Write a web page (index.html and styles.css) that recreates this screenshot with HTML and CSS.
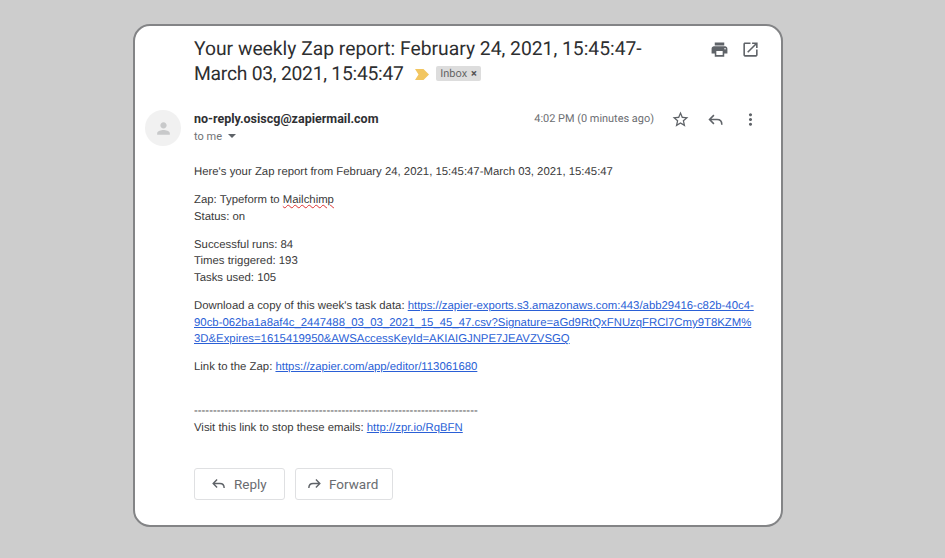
FILE: index.html
```html
<!DOCTYPE html>
<html lang="en">
<head>
<meta charset="utf-8">
<title>Your weekly Zap report</title>
<link rel="stylesheet" href="styles.css">
</head>
<body>
<main class="card">
  <div class="subject-row">
    <h1 class="subject">Your weekly Zap report: February 24, 2021, 15:45:47-<br><span class="subject-tight">March 03, 2021, 15:45:47</span>
      <svg class="marker" viewBox="0 0 14 11" aria-hidden="true"><path d="M0 0h8.500L14 5.500 8.500 11H0l3.500-5.500z"/></svg>
      <span class="label">Inbox <span class="label-x">×</span></span>
    </h1>
    <div class="top-icons">
      <svg class="icon" viewBox="0 0 24 24"><path d="M19 8H5c-1.660 0-3 1.340-3 3v6h4v4h12v-4h4v-6c0-1.660-1.340-3-3-3zm-3 11H8v-5h8v5zm3-7c-.55 0-1-.45-1-1s.45-1 1-1 1 .45 1 1-.45 1-1 1zm-1-9H6v4h12V3z"/></svg>
      <svg class="icon" viewBox="0 0 24 24"><path d="M19 19H5V5h7V3H5c-1.110 0-2 .9-2 2v14c0 1.100.89 2 2 2h14c1.100 0 2-.9 2-2v-7h-2v7zM14 3v2h3.590l-9.830 9.830 1.410 1.410L19 6.410V10h2V3h-7z"/></svg>
    </div>
  </div>
  <div class="message">
    <div class="avatar">
      <svg viewBox="0 0 24 24"><path d="M12 12c2.210 0 4-1.790 4-4s-1.790-4-4-4-4 1.790-4 4 1.790 4 4 4zm0 2c-2.670 0-8 1.340-8 4v2h16v-2c0-2.660-5.330-4-8-4z"/></svg>
    </div>
    <div class="content">
      <header class="meta">
        <div class="sender">
          <div class="from">no-reply.osiscg@zapiermail.com</div>
          <div class="to">to me <span class="caret"></span></div>
        </div>
        <div class="actions">
          <span class="time">4:02 PM (0 minutes ago)</span>
          <svg class="icon" viewBox="0 0 24 24"><path d="M22 9.240l-7.190-.62L12 2 9.190 8.630 2 9.240l5.460 4.730L5.820 21 12 17.270 18.180 21l-1.630-7.030L22 9.240zM12 15.400l-3.760 2.270 1-4.280-3.320-2.880 4.380-.38L12 6.100l1.710 4.040 4.380.38-3.320 2.880 1 4.280L12 15.400z"/></svg>
          <svg class="icon line-icon" viewBox="0 0 24 24"><path d="M10 6.500 4.500 12l5.500 5.500M5 12h9c3.500 0 6 2.500 6 6.500"/></svg>
          <svg class="icon more" viewBox="0 0 24 24"><path d="M12 8c1.100 0 2-.9 2-2s-.9-2-2-2-2 .9-2 2 .9 2 2 2zm0 2c-1.100 0-2 .9-2 2s.9 2 2 2 2-.9 2-2-.9-2-2-2zm0 6c-1.100 0-2 .9-2 2s.9 2 2 2 2-.9 2-2-.9-2-2-2z"/></svg>
        </div>
      </header>
      <div class="body">
        <p>Here's your Zap report from February 24, 2021, 15:45:47-March 03, 2021, 15:45:47</p>
        <p>Zap: Typeform to <span class="spell">Mailchimp</span><br>Status: on</p>
        <p>Successful runs: 84<br>Times triggered: 193<br>Tasks used: 105</p>
        <p>Download a copy of this week's task data: <a href="#">https://zapier-exports.s3.amazonaws.com:443/abb29416-c82b-40c4-<br>90cb-062ba1a8af4c_2447488_03_03_2021_15_45_47.csv?Signature=aGd9RtQxFNUzqFRCl7Cmy9T8KZM%<br>3D&amp;Expires=1615419950&amp;AWSAccessKeyId=AKIAIGJNPE7JEAVZVSGQ</a></p>
        <p>Link to the Zap: <a href="#">https://zapier.com/app/editor/113061680</a></p>
        <p class="signoff">---------------------------------------------------------------------------<br>Visit this link to stop these emails: <a href="#">http://zpr.io/RqBFN</a></p>
      </div>
      <div class="buttons">
        <button class="btn btn-reply" type="button">
          <svg class="line-icon" viewBox="0 0 24 24"><path d="M10 6.500 4.500 12l5.500 5.500M5 12h9c3.500 0 6 2.500 6 6.500"/></svg>
          Reply
        </button>
        <button class="btn btn-forward" type="button">
          <svg class="line-icon" viewBox="0 0 24 24"><path d="M14 6.500 19.500 12 14 17.500M19 12h-9c-3.500 0-6 2.500-6 6.500"/></svg>
          Forward
        </button>
      </div>
    </div>
  </div>
</main>
</body>
</html>
```
FILE: styles.css
```css
* { box-sizing: border-box; }
html, body { margin: 0; height: 100%; }
body {
  background: #cdcdcd;
  font-family: "Liberation Sans", Arial, sans-serif;
  padding: 24px 0 0 133px;
  overflow: hidden;
}
.card {
  width: 650px;
  height: 503px;
  background: #fff;
  border: 2px solid #838486;
  border-radius: 17px;
  padding: 10px 21px 0 10px;
}
.subject-row {
  display: flex;
  justify-content: space-between;
  padding-left: 49px;
}
.subject {
  margin: 0;
  font: 400 19.300px/25px "Roboto", sans-serif;
  color: #2d2e30;
  text-rendering: geometricPrecision;
}
.subject-tight { letter-spacing: -0.25px; }
.marker { width: 14px; height: 11px; fill: #f2c661; margin: 0 3px 0 6px; }
.label {
  display: inline-block;
  background: #dddddd;
  color: #666;
  font: 400 11px/15px "Roboto", sans-serif;
  padding: 0 3px 0 4px;
  border-radius: 2px;
  vertical-align: 3px;
  width: 45px;
  white-space: nowrap;
}
.label-x { font-weight: 700; color: #555; margin-left: 1px; }
.top-icons { display: flex; gap: 12px; padding-top: 4px; }
.icon { width: 19px; height: 19px; fill: #5f6368; display: block; }
.line-icon { fill: none; stroke: #5f6368; stroke-width: 2; }
.message { display: flex; margin-top: 24px; }
.avatar {
  flex: none;
  width: 36px;
  height: 36px;
  border-radius: 50%;
  background: #f1f1f1;
  display: flex;
  align-items: center;
  justify-content: center;
  margin-right: 13px;
}
.avatar svg { width: 19px; height: 19px; fill: #c8c9ca; }
.content { flex: 1; min-width: 0; }
.meta { display: flex; justify-content: space-between; }
.from { font: 700 12.500px/17px "Roboto", sans-serif; color: #2f3033; }
.to { font: 400 11px/15px "Roboto", sans-serif; color: #6f7174; margin-top: 2px; }
.caret {
  display: inline-block;
  width: 0; height: 0;
  border: 4px solid transparent;
  border-top: 4px solid #5f6368;
  border-bottom: 0;
  margin-left: 3px;
  vertical-align: 2px;
}
.actions { display: flex; align-items: flex-start; }
.time { font: 400 10.950px/17px "Roboto", sans-serif; color: #6c6e72; margin-right: 17px; text-rendering: geometricPrecision; }
.actions .icon { margin-right: 16px; }
.actions .more { margin-right: 0; }
.body {
  margin-top: 20px;
  font-size: 11.360px;
  line-height: 16.600px;
  color: #3a3a3a;
  text-rendering: geometricPrecision;
}
.body p { margin: 0 0 11.500px; white-space: nowrap; }
.body a { color: #2a5fd6; }
.spell { text-decoration: underline wavy #d33; text-decoration-thickness: 1px; }
.signoff { padding-top: 16px; }
.buttons { display: flex; gap: 10px; margin-top: 31px; }
.btn {
  display: flex;
  align-items: center;
  gap: 7px;
  height: 32px;
  background: #fff;
  border: 1px solid #dfe0e2;
  border-radius: 3px;
  font: 400 13.500px "Roboto", sans-serif;
  color: #6a6c70;
  padding: 0 0 0 15px;
}
.btn svg { width: 17px; height: 17px; }
.btn-reply { width: 91px; }
.btn-forward { width: 98px; padding-left: 10px; gap: 6px; }
```
